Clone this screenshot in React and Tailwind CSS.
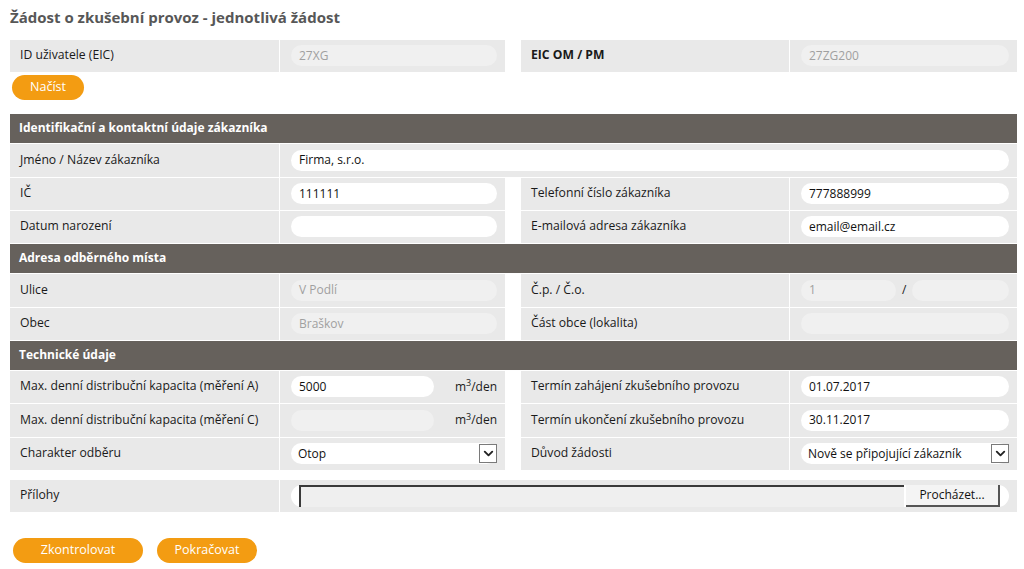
import { ChevronDown } from "lucide-react";

const font = { fontFamily: '"Open Sans", "Noto Sans", sans-serif' };

function Input({ value = "", disabled = false, className = "" }) {
  return (
    <div
      className={`flex h-[21px] items-center rounded-full px-[8px] text-[12px] ${
        disabled ? "bg-[#f0f0f0] text-[#a0a0a0]" : "bg-white text-[#111]"
      } ${className}`}
    >
      {value}
    </div>
  );
}

function Select({ value }) {
  return (
    <div className="flex h-[21px] w-full items-center justify-between rounded-full bg-white pl-[7px] text-[12px] text-[#111]">
      <span>{value}</span>
      <span className="flex h-[19px] w-[18px] items-center justify-center border border-[#7a7a7a] bg-white">
        <ChevronDown size={15} strokeWidth={3} className="text-[#222]" />
      </span>
    </div>
  );
}

function Label({ children, bold = false, className = "" }) {
  return (
    <div
      className={`flex items-center bg-[#e9e9e9] pl-[10px] text-[12.2px] text-[#1a1a1a] ${
        bold ? "font-bold" : ""
      } ${className}`}
    >
      {children}
    </div>
  );
}

function Value({ children, className = "" }) {
  return (
    <div className={`flex items-center bg-[#e9e9e9] pl-[11px] pr-[8px] ${className}`}>
      {children}
    </div>
  );
}

function Row({ label1, value1, label2, value2, h = "h-[32px]" }) {
  return (
    <div className={`flex ${h}`}>
      <Label className="w-[269px]">{label1}</Label>
      <Value className="ml-px w-[225px]">{value1}</Value>
      <Label className="ml-4 w-[268px]">{label2}</Label>
      <Value className="ml-px flex-1">{value2}</Value>
    </div>
  );
}

function Header({ children }) {
  return (
    <div className="flex h-[29px] items-center bg-[#66615c] pl-[9px] text-[12px] font-bold text-white">
      {children}
    </div>
  );
}

function OrangeButton({ children, className = "" }) {
  return (
    <button
      className={`h-[25px] rounded-full bg-[#f39c12] text-[12.5px] text-white ${className}`}
    >
      {children}
    </button>
  );
}

function Unit() {
  return (
    <span className="ml-auto text-[12px] text-[#1a1a1a]">
      m<sup className="text-[9px]">3</sup>/den
    </span>
  );
}

export default function App() {
  return (
    <div className="min-h-screen bg-white pl-[10px] pr-[7px]" style={font}>
      <h1 className="pt-[6px] text-[15px] font-bold text-[#575757]">
        Žádost o zkušební provoz - jednotlivá žádost
      </h1>

      <div className="mt-[11px]">
        <Row
          label1="ID uživatele (EIC)"
          value1={<Input value="27XG" disabled className="w-full" />}
          label2={<span className="font-bold">EIC OM / PM</span>}
          value2={<Input value="27ZG200" disabled className="w-full" />}
        />
      </div>

      <OrangeButton className="mt-[3px] ml-[2px] w-[72px]">Načíst</OrangeButton>

      <div className="mt-[14px] flex flex-col gap-px">
        <Header>Identifikační a kontaktní údaje zákazníka</Header>
        <div className="flex h-[33px]">
          <Label className="w-[269px]">Jméno / Název zákazníka</Label>
          <Value className="ml-px flex-1">
            <Input value="Firma, s.r.o." className="w-full" />
          </Value>
        </div>
        <Row
          label1="IČ"
          value1={<Input value="111111" className="w-full" />}
          label2="Telefonní číslo zákazníka"
          value2={<Input value="777888999" className="w-full" />}
        />
        <Row
          label1="Datum narození"
          value1={<Input className="w-full" />}
          label2="E-mailová adresa zákazníka"
          value2={<Input value="email@email.cz" className="w-full" />}
        />

        <Header>Adresa odběrného místa</Header>
        <Row
          h="h-[33px]"
          label1="Ulice"
          value1={<Input value="V Podlí" disabled className="w-full" />}
          label2="Č.p. / Č.o."
          value2={
            <div className="flex w-full items-center">
              <Input value="1" disabled className="w-[95px]" />
              <span className="mx-[6px] text-[12px] text-[#1a1a1a]">/</span>
              <Input disabled className="flex-1" />
            </div>
          }
        />
        <Row
          label1="Obec"
          value1={<Input value="Braškov" disabled className="w-full" />}
          label2="Část obce (lokalita)"
          value2={<Input disabled className="w-full" />}
        />

        <Header>Technické údaje</Header>
        <Row
          label1="Max. denní distribuční kapacita (měření A)"
          value1={
            <div className="flex w-full items-center">
              <Input value="5000" className="w-[143px]" />
              <Unit />
            </div>
          }
          label2="Termín zahájení zkušebního provozu"
          value2={<Input value="01.07.2017" className="w-full" />}
        />
        <Row
          h="h-[33px]"
          label1="Max. denní distribuční kapacita (měření C)"
          value1={
            <div className="flex w-full items-center">
              <Input disabled className="w-[143px]" />
              <Unit />
            </div>
          }
          label2="Termín ukončení zkušebního provozu"
          value2={<Input value="30.11.2017" className="w-full" />}
        />
        <Row
          label1="Charakter odběru"
          value1={<Select value="Otop" />}
          label2="Důvod žádosti"
          value2={<Select value="Nově se připojující zákazník" />}
        />
      </div>

      <div className="mt-[10px] flex h-[32px]">
        <Label className="w-[269px]">Přílohy</Label>
        <Value className="ml-px flex-1">
          <div className="flex h-[22px] w-full items-center rounded-full bg-white pl-[8px]">
            <div className="h-[22px] flex-1 border-t-2 border-l-2 border-t-[#3a3a3a] border-l-[#3a3a3a] bg-[#efefef]" />
            <button className="ml-[2px] h-[22px] w-[94px] border-r-2 border-b-2 border-r-[#555] border-b-[#555] bg-[#f4f4f4] text-[12px] text-[#111]">
              Procházet...
            </button>
            <div className="w-[9px]" />
          </div>
        </Value>
      </div>

      <div className="mt-[26px] flex gap-[14px] pl-[3px]">
        <OrangeButton className="w-[130px]">Zkontrolovat</OrangeButton>
        <OrangeButton className="w-[100px]">Pokračovat</OrangeButton>
      </div>
    </div>
  );
}
